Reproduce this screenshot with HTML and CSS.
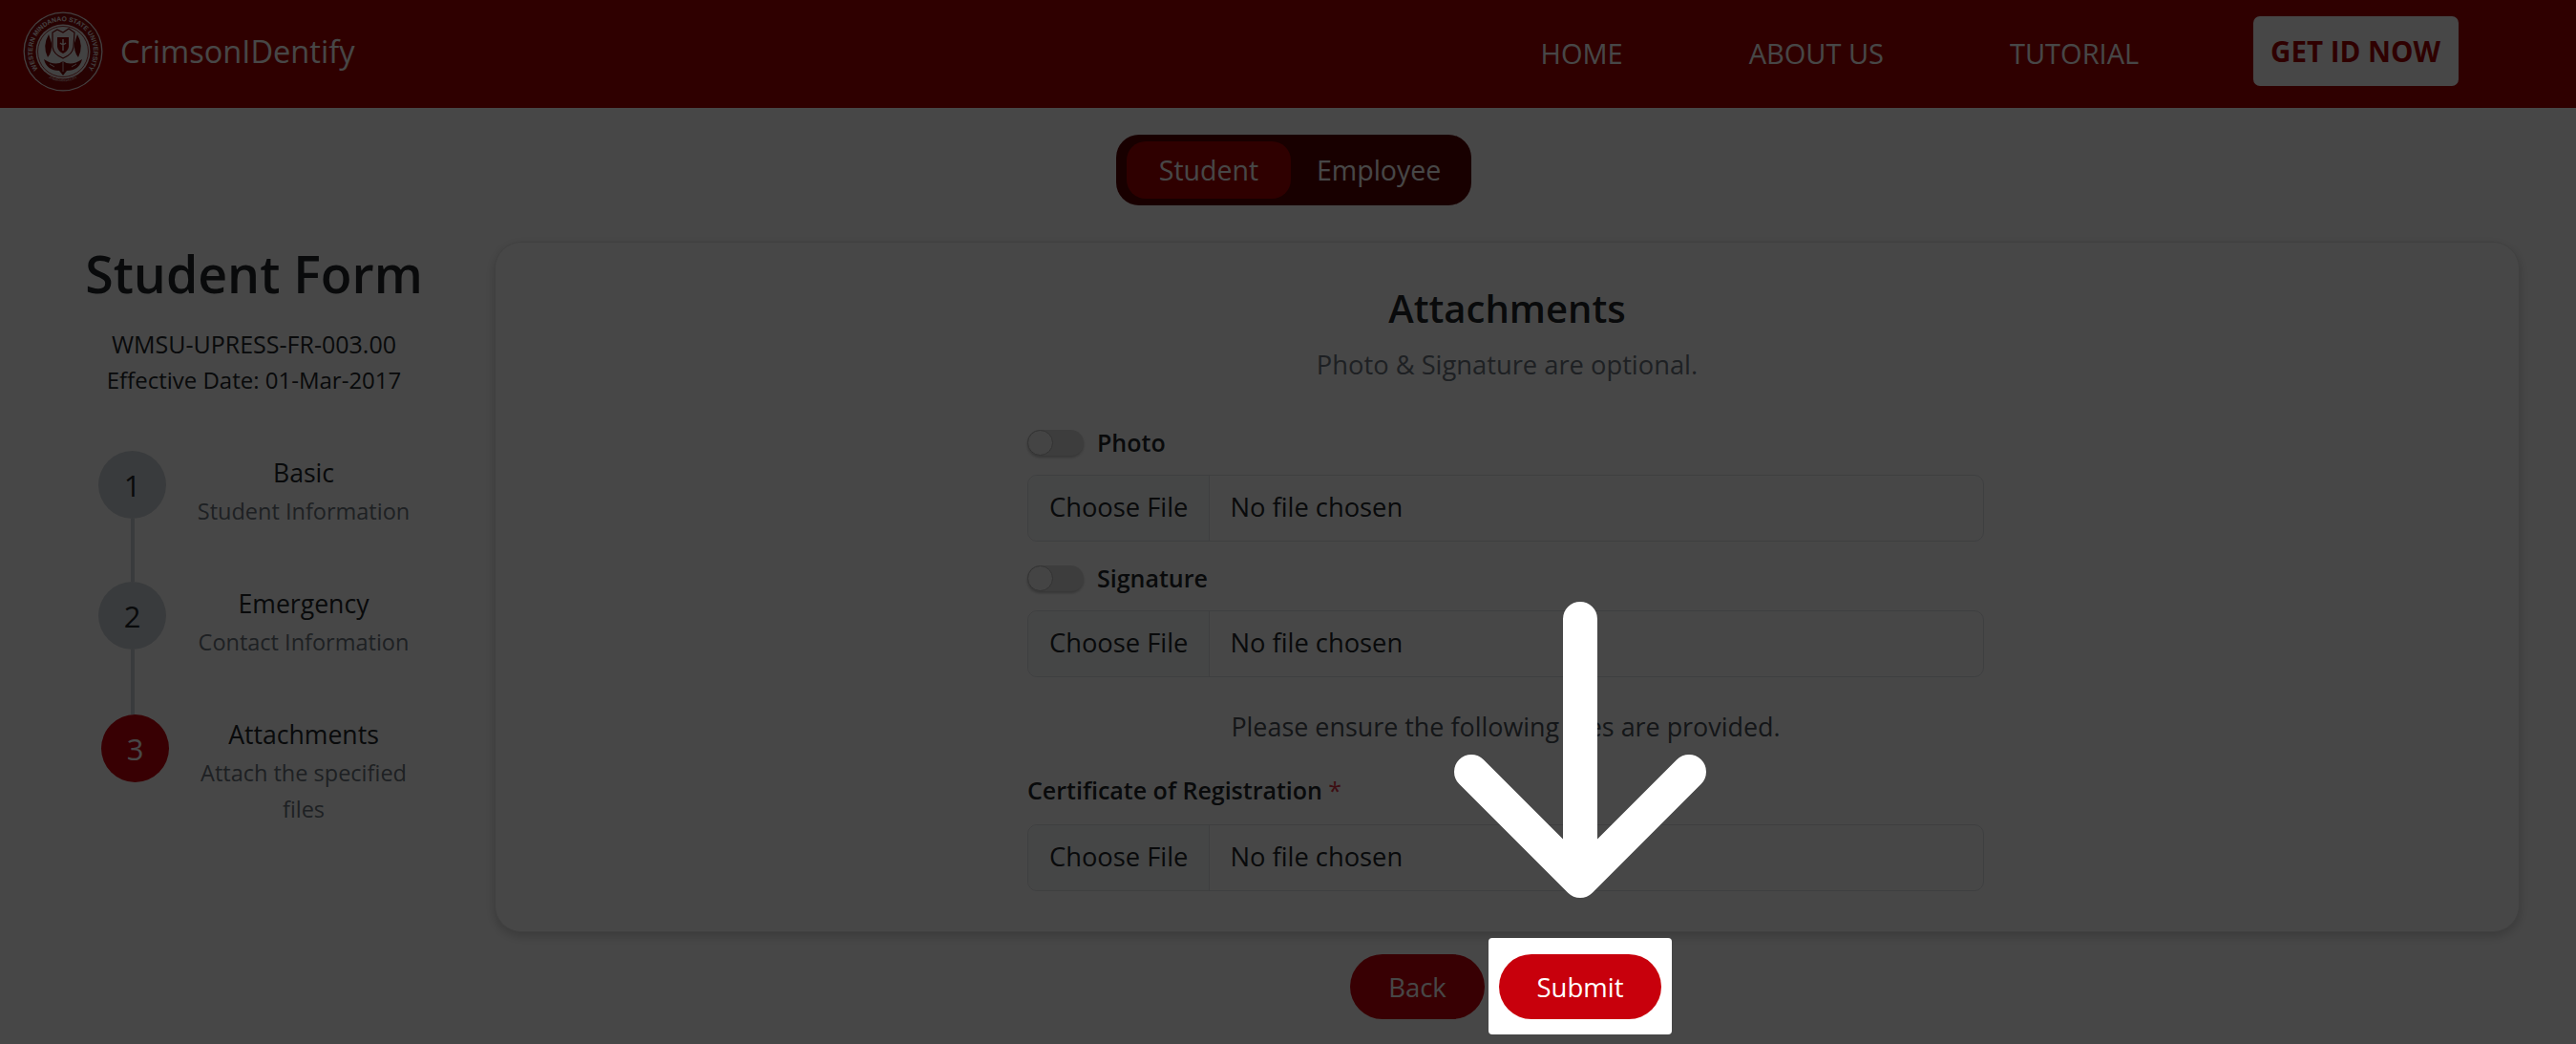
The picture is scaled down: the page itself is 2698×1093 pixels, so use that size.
FILE: index.html
```html
<!DOCTYPE html>
<html lang="en">
<head>
    <meta charset="UTF-8">
    <title>CrimsonIDentify - Student Form</title>
    <link rel="stylesheet" href="styles.css">
</head>
<body>
    <nav class="navbar">
        <a class="brand" href="#">
            <svg class="seal" viewBox="0 0 84 84">
                <defs>
                    <path id="sealTop" d="M23.6 68.2 A32 32 0 1 1 60.4 68.2"/>
                    <path id="sealBottom" d="M22 66 A31 31 0 0 0 62 66"/>
                </defs>
                <circle cx="42" cy="42" r="41.5" fill="#f2e9e9"/>
                <circle cx="42" cy="42" r="40.2" fill="#8c0a0a"/>
                <circle cx="42" cy="42" r="28.5" fill="#f2e9e9"/>
                <circle cx="42" cy="42" r="26.5" fill="#ececec" stroke="#8c0a0a" stroke-width=".8"/>
                <text class="seal-text"><textPath href="#sealTop" startOffset="50%" text-anchor="middle">WESTERN MINDANAO STATE UNIVERSITY</textPath></text>
                <text class="seal-small"><textPath href="#sealBottom" startOffset="50%" text-anchor="middle">ZAMBOANGA CITY</textPath></text>
                <path d="M31 22 L36 19 L42 22 L48 18 L54 22 L53 37 Q52 45 42 49 Q32 45 31 37 Z" fill="#efe6e6" stroke="#7a0808" stroke-width="1.2"/>
                <path d="M36 27 H48 V37 Q47 42 42 44 Q37 42 36 37 Z" fill="#8c0a0a"/>
                <path d="M42 29 V41 M39 33 Q42 36 45 33" fill="none" stroke="#f2e9e9" stroke-width="1.4"/>
                <path d="M27 24 Q20 36 26 48 Q31 42 30 33 Z M57 24 Q64 36 58 48 Q53 42 54 33 Z" fill="#7a0808"/>
                <path d="M42 52 Q34 58 22 50 Q25 62 38 62 L42 67 L46 62 Q59 62 62 50 Q50 58 42 52 Z" fill="#7a0808"/>
                <path d="M42 52 V63 M33 58 L28 55 M51 58 L56 55" stroke="#f2e9e9" stroke-width=".8" fill="none"/>
            </svg>
            <span>CrimsonIDentify</span>
        </a>
        <div class="nav-links">
            <a href="#" class="nav-link">HOME</a>
            <a href="#" class="nav-link">ABOUT US</a>
            <a href="#" class="nav-link">TUTORIAL</a>
            <a href="#" class="nav-cta">GET ID NOW</a>
        </div>
    </nav>

    <div class="switch-row">
        <div class="form-switcher">
            <button class="switch-btn active">Student</button>
            <button class="switch-btn">Employee</button>
        </div>
    </div>

    <main class="layout">
        <aside class="sidebar">
            <h1>Student Form</h1>
            <p class="form-code">WMSU-UPRESS-FR-003.00<br>Effective Date: 01-Mar-2017</p>
            <ol class="steps">
                <li class="step">
                    <div class="step-marker"><span class="step-circle">1</span><span class="step-line"></span></div>
                    <div class="step-text"><div class="step-title">Basic</div><div class="step-sub">Student Information</div></div>
                </li>
                <li class="step">
                    <div class="step-marker"><span class="step-circle">2</span><span class="step-line"></span></div>
                    <div class="step-text"><div class="step-title">Emergency</div><div class="step-sub">Contact Information</div></div>
                </li>
                <li class="step step-current">
                    <div class="step-marker"><span class="step-circle">3</span></div>
                    <div class="step-text"><div class="step-title">Attachments</div><div class="step-sub">Attach the specified files</div></div>
                </li>
            </ol>
        </aside>

        <section class="content">
            <div class="card">
                <h2>Attachments</h2>
                <p class="card-sub">Photo &amp; Signature are optional.</p>
                <div class="fields">
                    <div class="toggle-row first"><span class="toggle"></span><label>Photo</label></div>
                    <div class="file-input"><span class="file-btn">Choose File</span><span class="file-name">No file chosen</span></div>
                    <div class="toggle-row"><span class="toggle"></span><label>Signature</label></div>
                    <div class="file-input"><span class="file-btn">Choose File</span><span class="file-name">No file chosen</span></div>
                    <p class="notice">Please ensure the following files are provided.</p>
                    <div class="field-label"><label>Certificate of Registration</label> <span class="required">*</span></div>
                    <div class="file-input"><span class="file-btn">Choose File</span><span class="file-name">No file chosen</span></div>
                </div>
            </div>
            <div class="actions">
                <button class="pill-btn">Back</button>
                <div class="tour-target">
                    <svg class="tour-arrow" viewBox="0 0 264 310">
                        <path d="M132 18 V292 M18 178 L132 292 L246 178" fill="none" stroke="#fff" stroke-width="36" stroke-linecap="round" stroke-linejoin="round"/>
                    </svg>
                    <button class="pill-btn">Submit</button>
                </div>
            </div>
        </section>
    </main>

    <div class="overlay"></div>
</body>
</html>
```

FILE: styles.css
```css
/* General Styles */
body {
    margin: 0;
    height: 1093px;
    overflow: hidden;
    background-color: #fff;
    color: #212529;
    font-family: 'Open Sans', sans-serif;
}
h1, h2, p, ol {
    margin: 0;
    padding: 0;
}
button {
    font-family: inherit;
    border: none;
    cursor: pointer;
}
a {
    text-decoration: none;
    color: inherit;
}

/* Navbar */
.navbar {
    display: flex;
    align-items: center;
    height: 113px;
    padding: 0 123px 0 24px;
    background-color: #a80000;
    color: #fff;
}
.brand {
    display: flex;
    align-items: center;
    gap: 18px;
    font-size: 32.6px;
    margin-top: -6px;
}
.seal {
    width: 84px;
    height: 84px;
}
.seal-text {
    font-family: 'Liberation Sans', sans-serif;
    font-size: 6.8px;
    font-weight: bold;
    fill: #f2e9e9;
}
.seal-small {
    font-family: 'Liberation Sans', sans-serif;
    font-size: 3.4px;
    fill: #f2e9e9;
}
.nav-links {
    display: flex;
    align-items: center;
    margin-left: auto;
}
.nav-link {
    font-size: 29px;
    margin-right: 132px;
    margin-top: -2px;
}
.nav-link:nth-child(3) {
    margin-right: 120px;
}
.nav-cta {
    display: flex;
    align-items: center;
    height: 73px;
    padding: 0 19px 0 18px;
    margin-top: -6px;
    border-radius: 7px;
    background: #fff;
    color: #a80000;
    font-size: 29.5px;
    font-weight: 700;
}

/* Student / Employee switch */
.switch-row {
    display: flex;
    justify-content: center;
    padding: 28px 0 0 12px;
}
.form-switcher {
    display: flex;
    align-items: center;
    width: 372px;
    height: 74px;
    padding: 0 11px;
    box-sizing: border-box;
    border-radius: 24px;
    background: #560000;
}
.switch-btn {
    height: 60px;
    background: transparent;
    color: #fff;
    font-size: 28.5px;
    border-radius: 20px;
    padding: 0 0 0 24px;
}
.switch-btn.active {
    width: 172px;
    padding: 0;
    background: #a80000;
}
.switch-btn.active + .switch-btn {
    padding-left: 27px;
}

/* Layout */
.layout {
    display: flex;
    margin-top: 38px;
    padding-right: 59px;
}
.sidebar {
    width: 518px;
    flex-shrink: 0;
}
.sidebar h1 {
    width: 532px;
    margin-top: -1px;
    text-align: center;
    font-size: 53.6px;
    font-weight: 600;
    line-height: 70px;
}
.form-code {
    width: 532px;
    margin-top: 19px;
    text-align: center;
    font-size: 24px;
    font-weight: 500;
    line-height: 38px;
}
.form-code::first-line {
    font-size: 25px;
}
.steps {
    list-style: none;
    margin-top: 55px;
    padding-left: 103px;
}
.step {
    display: flex;
    height: 137px;
}
.step:nth-child(2) {
    height: 139px;
}
.step-marker {
    display: flex;
    flex-direction: column;
    align-items: center;
    width: 71px;
}
.step-circle {
    display: flex;
    align-items: center;
    justify-content: center;
    flex-shrink: 0;
    width: 71px;
    height: 71px;
    border-radius: 50%;
    background: #ced4da;
    font-size: 31px;
}
.step-line {
    flex: 1;
    width: 4px;
    background: #ced4da;
}
.step-current {
    margin-left: 3px;
}
.step-current .step-circle {
    background: #c8000c;
    color: #fff;
}
.step-text {
    width: 224px;
    margin-left: 32px;
    padding-top: 4px;
    text-align: center;
}
.step-current .step-text {
    margin-left: 29px;
    padding-top: 2px;
}
.step-title {
    font-size: 26.6px;
    line-height: 38px;
    margin-bottom: 2px;
}
.step-sub {
    font-size: 23.5px;
    line-height: 38px;
    color: #6c757d;
}

/* Card */
.content {
    flex: 1;
}
.card {
    display: flex;
    flex-direction: column;
    align-items: center;
    height: 723px;
    box-sizing: border-box;
    padding-top: 44px;
    border: 1px solid #e6e6e6;
    border-radius: 28px;
    background: #fff;
    box-shadow: 0 4px 12px rgba(0, 0, 0, 0.2);
}
.card h2 {
    font-size: 40px;
    font-weight: 600;
    line-height: 50px;
}
.card-sub {
    margin-top: 14px;
    font-size: 27.3px;
    line-height: 40px;
    color: #6c757d;
}
.fields {
    width: 1002px;
    margin-right: 3px;
}
.toggle-row {
    display: flex;
    align-items: center;
    gap: 14px;
    height: 38px;
    margin-top: 19px;
}
.toggle-row.first {
    margin-top: 42px;
}
.toggle-row label, .field-label label {
    font-size: 25px;
    font-weight: 600;
}
.toggle {
    position: relative;
    width: 59px;
    height: 27px;
    box-sizing: border-box;
    border-radius: 14px;
    background: #dcdcdc;
    box-shadow: 0 2px 3px rgba(0, 0, 0, 0.25);
}
.toggle::before {
    content: "";
    position: absolute;
    left: 0;
    top: 0;
    width: 27px;
    height: 27px;
    box-sizing: border-box;
    border-radius: 50%;
    border: 1px solid #b4b4b4;
    background: #f4f4f4;
}
.file-input {
    display: flex;
    align-items: center;
    height: 70px;
    box-sizing: border-box;
    margin-top: 15px;
    border: 1px solid #dee2e6;
    border-radius: 10px;
    font-size: 27.3px;
}
.file-btn {
    display: flex;
    align-items: center;
    height: 100%;
    box-sizing: border-box;
    padding: 0 22px 3px 22px;
    border-right: 1px solid #dee2e6;
    background: #f8f9fa;
    border-radius: 10px 0 0 10px;
}
.file-name {
    margin-left: 21px;
    padding-bottom: 3px;
}
.notice {
    margin-top: 32px;
    text-align: center;
    font-size: 26.9px;
    line-height: 40px;
    color: #495057;
}
.field-label {
    margin-top: 27px;
    margin-bottom: -2px;
    line-height: 38px;
}
.required {
    margin-left: 2px;
    color: #dc3545;
    font-size: 25px;
}

/* Buttons and tour highlight */
.actions {
    display: flex;
    justify-content: center;
    gap: 15px;
    margin-top: 23px;
    padding-right: 3px;
}
.pill-btn {
    height: 68px;
    padding: 0;
    border-radius: 34px;
    background: #c8000c;
    color: #fff;
    font-size: 27.5px;
    font-weight: 500;
    width: 141px;
}
.tour-target {
    position: relative;
    z-index: 20;
}
.tour-target .pill-btn {
    display: block;
    width: 170px;
}
.tour-target::before {
    content: "";
    position: absolute;
    z-index: -1;
    inset: -17px -11px -16px -11px;
    border-radius: 4px;
    background: #fff;
}
.tour-arrow {
    position: absolute;
    left: -47px;
    bottom: calc(100% + 59px);
    width: 264px;
    height: 310px;
}
.overlay {
    position: fixed;
    inset: 0;
    z-index: 10;
    background: rgba(0, 0, 0, 0.72);
}
```
